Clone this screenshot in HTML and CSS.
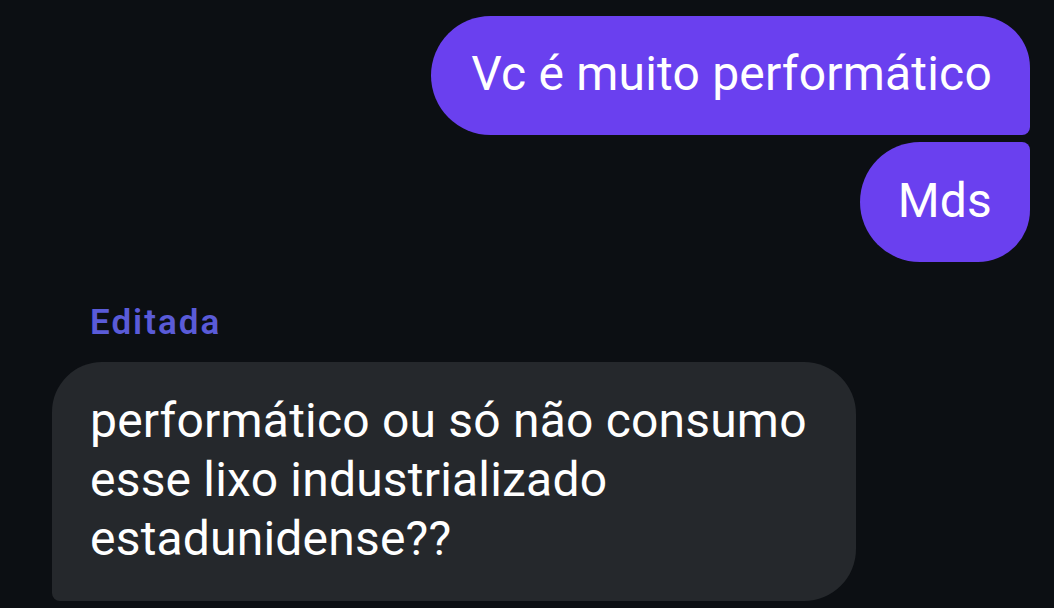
FILE: index.html
```html
<!DOCTYPE html>
<html lang="pt">
<head>
    <meta charset="UTF-8">
    <meta name="viewport" content="width=device-width, initial-scale=1.0">
    <title>Chat</title>
    <link rel="stylesheet" href="styles.css">
</head>
<body>
    <div class="chat">
        <div class="row sent">
            <div class="bubble out first">Vc é muito performático</div>
        </div>
        <div class="row sent">
            <div class="bubble out last">Mds</div>
        </div>

        <div class="reply-label">Editada</div>
        <div class="row received">
            <div class="bubble in">performático ou só não consumo<br>esse lixo industrializado<br>estadunidense??</div>
        </div>
    </div>
</body>
</html>
```

FILE: styles.css
```css
body, html {
    margin: 0;
    padding: 0;
    background: #0c0f13;
    height: 100%;
    overflow: hidden;
}

.chat {
    display: flex;
    flex-direction: column;
    padding-top: 16px;
    font-family: Roboto, "Noto Sans", sans-serif;
    color: #fff;
}

.row {
    display: flex;
}

.sent {
    justify-content: flex-end;
    padding-right: 24px;
    margin-bottom: 7px;
}

.received {
    padding-left: 52px;
}

.bubble {
    font-size: 48px;
    line-height: 59px;
    letter-spacing: 0.2px;
}

.out {
    background: #6a40ef;
}

.out.first {
    padding: 28px 38px 32px 40px;
    border-radius: 60px 52px 8px 60px;
}

.out.last {
    padding: 29px 38px 32px 38px;
    border-radius: 60px 8px 52px 60px;
}

.reply-label {
    margin-top: 34px;
    margin-bottom: 19px;
    margin-left: 90px;
    font-size: 35px;
    line-height: 40px;
    font-weight: 600;
    letter-spacing: 2px;
    color: #5a5bd8;
}

.in {
    background: #25282c;
    border-radius: 50px 52px 52px 8px;
    padding: 29px 38px 33px 38px;
    width: 728px;
}
```
